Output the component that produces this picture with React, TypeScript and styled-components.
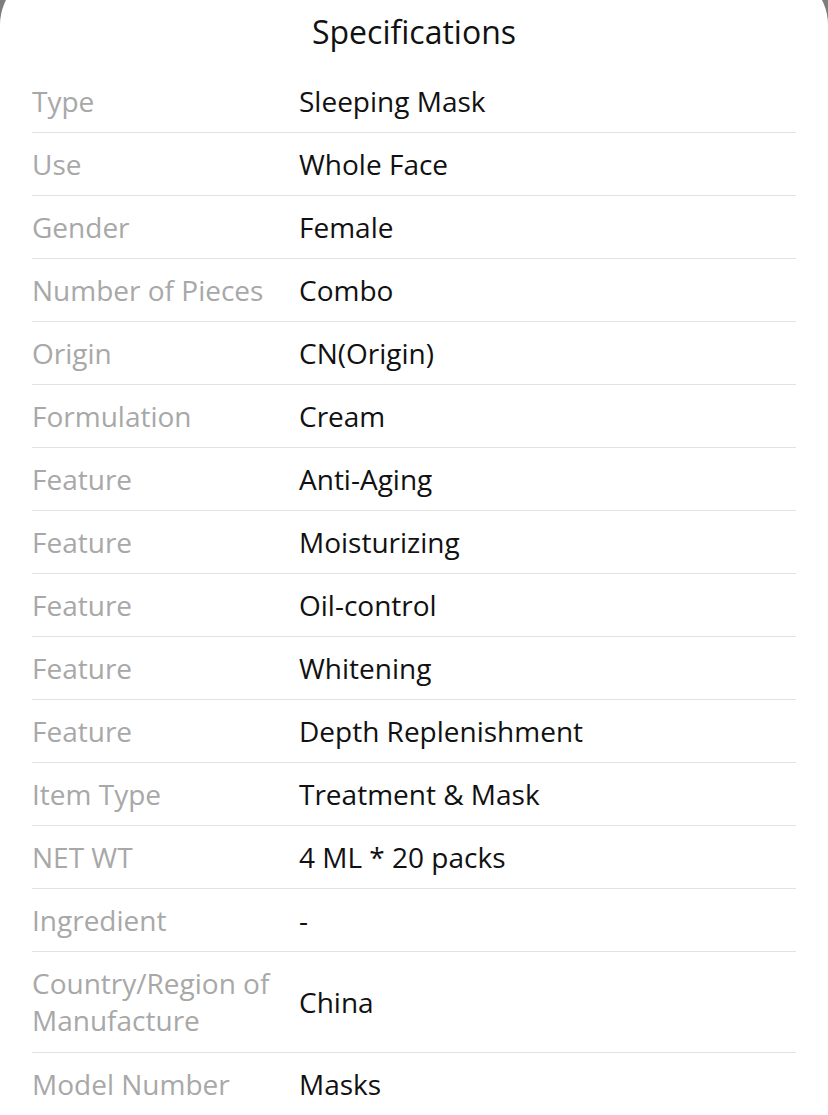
import React from "react";
import styled, { createGlobalStyle } from "styled-components";

const GlobalStyle = createGlobalStyle`
  html, body {
    margin: 0;
    padding: 0;
    background: #7d7d7d;
    overflow: hidden;
  }
  body {
    font-family: "Open Sans", "Noto Sans", sans-serif;
  }
`;

const Sheet = styled.div`
  margin-top: -30px;
  padding-top: 30px;
  min-height: 1115px;
  background: #fff;
  border-radius: 55px 55px 0 0;
`;

const Title = styled.h1`
  margin: 0;
  padding: 10px 0 16px;
  text-align: center;
  font-size: 32px;
  font-weight: 400;
  line-height: 44px;
  color: #111;
`;

const Table = styled.div`
  margin: 0 32px;
`;

const Row = styled.div<{ $tall?: boolean }>`
  display: flex;
  align-items: center;
  padding: 13px 0 ${(p) => (p.$tall ? 13 : 12)}px;
  border-bottom: 1px solid #e2e2e2;
`;

const Label = styled.div`
  flex: 0 0 250px;
  margin-right: 17px;
  font-size: 28px;
  line-height: 37px;
  color: #a8a8a8;
`;

const Value = styled.div`
  flex: 1;
  font-size: 28px;
  line-height: 37px;
  color: #111;
`;

const specs: [string, string][] = [
  ["Type", "Sleeping Mask"],
  ["Use", "Whole Face"],
  ["Gender", "Female"],
  ["Number of Pieces", "Combo"],
  ["Origin", "CN(Origin)"],
  ["Formulation", "Cream"],
  ["Feature", "Anti-Aging"],
  ["Feature", "Moisturizing"],
  ["Feature", "Oil-control"],
  ["Feature", "Whitening"],
  ["Feature", "Depth Replenishment"],
  ["Item Type", "Treatment & Mask"],
  ["NET WT", "4 ML * 20 packs"],
  ["Ingredient", "-"],
  ["Country/Region of Manufacture", "China"],
  ["Model Number", "Masks"],
];

const App: React.FC = () => (
  <>
    <GlobalStyle />
    <Sheet>
      <Title>Specifications</Title>
      <Table>
        {specs.map(([label, value], i) => (
          <Row key={i} $tall={label.length > 20}>
            <Label>{label}</Label>
            <Value>{value}</Value>
          </Row>
        ))}
      </Table>
    </Sheet>
  </>
);

export default App;
